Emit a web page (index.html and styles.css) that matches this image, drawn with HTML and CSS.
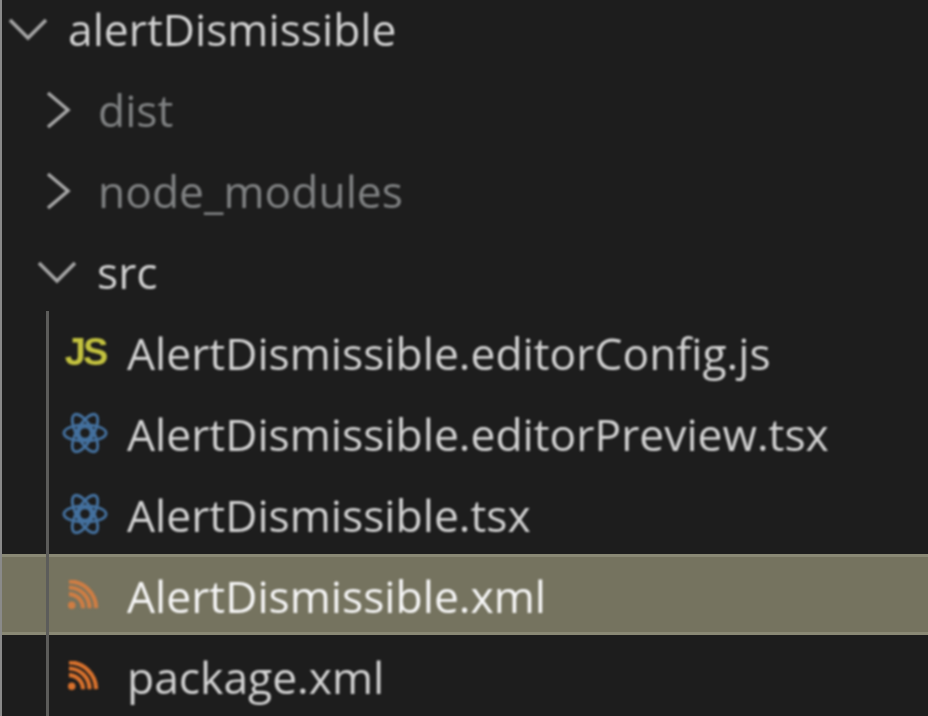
FILE: index.html
```html
<!DOCTYPE html>
<html lang="en">
<head>
<meta charset="utf-8">
<title>Explorer</title>
<link rel="stylesheet" href="styles.css">
</head>
<body>
<div class="tree">
  <div class="row depth0">
    <svg class="chev" viewBox="0 0 40 40"><path d="M2 11 L20 29 L38 11"/></svg>
    <span class="name bright">alertDismissible</span>
  </div>
  <div class="row depth1">
    <svg class="chev" viewBox="0 0 40 40"><path d="M10 3 L30 20 L10 37"/></svg>
    <span class="name dim">dist</span>
  </div>
  <div class="row depth1">
    <svg class="chev" viewBox="0 0 40 40"><path d="M10 3 L30 20 L10 37"/></svg>
    <span class="name dim">node_modules</span>
  </div>
  <div class="row depth1b">
    <svg class="chev" viewBox="0 0 40 40"><path d="M2 11 L20 29 L38 11"/></svg>
    <span class="name bright">src</span>
  </div>
  <div class="group">
    <div class="row file">
      <span class="icon js">JS</span>
      <span class="name bright">AlertDismissible.editorConfig.js</span>
    </div>
    <div class="row file">
      <svg class="icon react" viewBox="0 0 48 48"><circle cx="24" cy="24" r="6.5"/><ellipse cx="24" cy="24" rx="22" ry="8.500"/><ellipse cx="24" cy="24" rx="22" ry="8.500" transform="rotate(60 24 24)"/><ellipse cx="24" cy="24" rx="22" ry="8.500" transform="rotate(120 24 24)"/></svg>
      <span class="name bright">AlertDismissible.editorPreview.tsx</span>
    </div>
    <div class="row file">
      <svg class="icon react" viewBox="0 0 48 48"><circle cx="24" cy="24" r="6.5"/><ellipse cx="24" cy="24" rx="22" ry="8.500"/><ellipse cx="24" cy="24" rx="22" ry="8.500" transform="rotate(60 24 24)"/><ellipse cx="24" cy="24" rx="22" ry="8.500" transform="rotate(120 24 24)"/></svg>
      <span class="name bright">AlertDismissible.tsx</span>
    </div>
    <div class="row file selected">
      <svg class="icon rss" viewBox="0 0 36 32"><circle cx="6" cy="27" r="4"/><path d="M3 15 A15 15 0 0 1 18 30"/><path d="M3 8 A22 22 0 0 1 25 30"/><path d="M3 1.500 A29 29 0 0 1 32 30"/></svg>
      <span class="name white">AlertDismissible.xml</span>
    </div>
    <div class="row file">
      <svg class="icon rss strong" viewBox="0 0 36 32"><circle cx="6" cy="27" r="4"/><path d="M3 15 A15 15 0 0 1 18 30"/><path d="M3 8 A22 22 0 0 1 25 30"/><path d="M3 1.500 A29 29 0 0 1 32 30"/></svg>
      <span class="name bright">package.xml</span>
    </div>
  </div>
</div>
</body>
</html>
```
FILE: styles.css
```css
html, body {
  margin: 0;
  height: 100%;
  overflow: hidden;
  background: #1d1d1d;
}

body {
  border-left: 2px solid #8a8a8a;
  box-sizing: border-box;
  font-family: "Open Sans", "Noto Sans", sans-serif;
}

.row {
  display: flex;
  align-items: center;
  height: 81px;
  box-sizing: border-box;
  white-space: nowrap;
}

.depth0 {
  height: 68px;
  padding-left: 6px;
  padding-bottom: 13px;
}
.depth1 { padding-left: 36px; }
.depth1b { padding-left: 35px; }
.file { padding-left: 58px; }

.chev {
  width: 40px;
  height: 40px;
  flex: none;
  fill: none;
  stroke: #a8a8a8;
  stroke-width: 3.5;
  margin-top: 3px;
  margin-right: 20px;
  filter: blur(0.8px);
}

.name {
  font-size: 44.4px;
  font-weight: 500;
  line-height: 1;
  padding-top: 4px;
  filter: blur(0.9px);
}

.bright { color: #d2d2d2; }
.dim { color: #808283; }
.white { color: #f6f6f6; }

.group {
  position: relative;
}

.group::before {
  content: "";
  position: absolute;
  left: 44px;
  top: 0;
  bottom: 0;
  width: 3px;
  background: #5c5c5a;
  filter: blur(0.6px);
  z-index: 1;
}

.selected {
  background: #75735f;
  border-top: 3px solid #8a8975;
  border-bottom: 3px solid #8a8975;
}

.icon {
  flex: none;
  width: 50px;
  margin-right: 17px;
  filter: blur(0.8px);
}

.js {
  font-family: "Liberation Sans", sans-serif;
  font-size: 38px;
  font-weight: 700;
  color: #c3c23f;
  letter-spacing: -3px;
  line-height: 1;
  text-align: center;
}

.react {
  height: 46px;
  fill: none;
  stroke: #44719f;
  stroke-width: 3;
}

.rss {
  width: 34px;
  height: 30px;
  margin-left: 6px;
  margin-right: 27px;
  fill: none;
  stroke: #cf7d43;
  stroke-width: 4.500;
}

.rss circle {
  fill: #cf7d43;
  stroke: none;
}

.strong {
  stroke: #d9722d;
}

.strong circle {
  fill: #d9722d;
}
```
